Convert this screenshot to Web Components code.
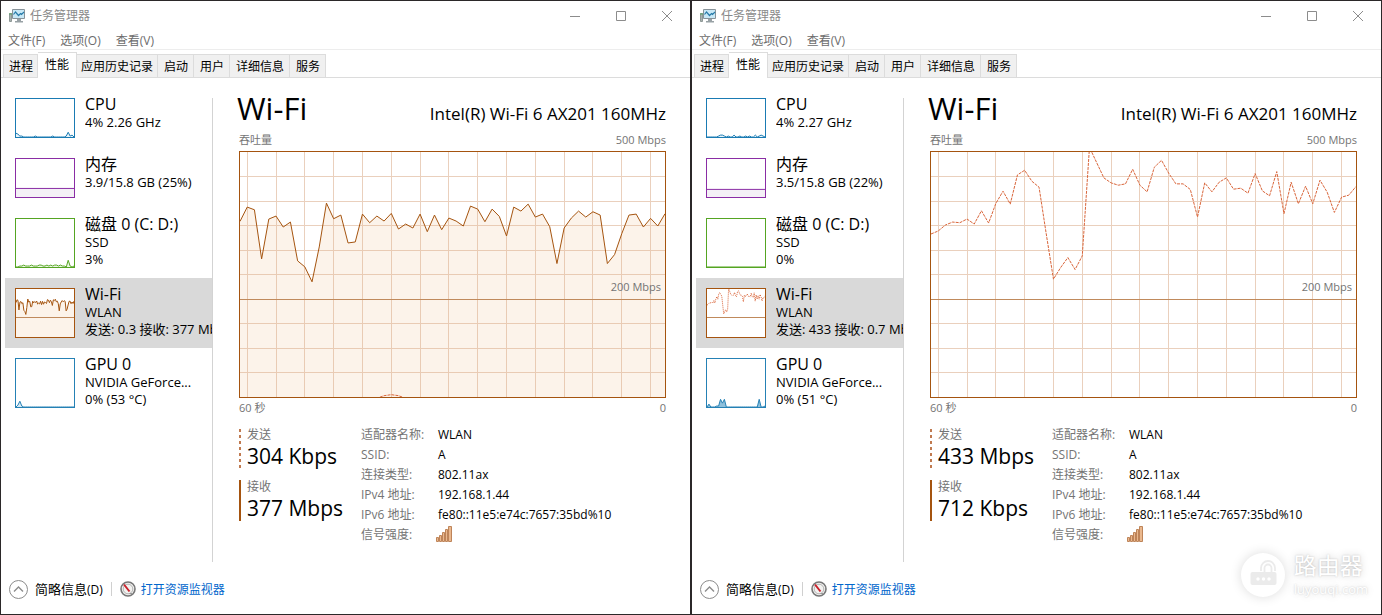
<!DOCTYPE html>
<html lang="zh-CN">
<head>
<meta charset="utf-8">
<title>任务管理器</title>
<style>
  html { height: 100%; }
  body {
    margin: 0;
    min-height: 100%;
    display: grid;
    grid-template-columns: 1fr 1fr;
    background: #fff;
    color: #000;
    font: 12px/17px "Open Sans", "Noto Sans CJK SC", sans-serif;
    position: relative;
  }
  site-mark { position: absolute; right: 16px; bottom: 17px; }
</style>
</head>
<body>

<task-window>
  <perf-item slot="item" name="CPU" short>
    <trace-chart slot="thumb" color="#1a7bb3" fill="#e8f3f9" max="40" receive="4,3,1,1,0,0,0,0,0,0,1,0,0,0,0,0,0,0,0,1,0,0,0,0,0,0,1,5,1,2,0"></trace-chart>
    <span>4% 2.26 GHz</span>
  </perf-item>
  <perf-item slot="item" name="内存" short>
    <trace-chart slot="thumb" color="#8a2da5" fill="#f4f0f6" max="40" receive="9,9"></trace-chart>
    <span>3.9/15.8 GB (25%)</span>
  </perf-item>
  <perf-item slot="item" name="磁盘 0 (C: D:)">
    <trace-chart slot="thumb" color="#55a522" fill="#edf7e6" max="50" receive="0,0,1,1,2,1,1,1,2,1,1,1,2,2,1,1,2,1,2,1,2,2,1,2,1,1,0,7,1,0,1"></trace-chart>
    <span>SSD</span><span>3%</span>
  </perf-item>
  <perf-item slot="item" name="Wi-Fi" selected>
    <trace-chart slot="thumb" series="download" color="#a5540f" fill="#fcf3ea" max="738" mark></trace-chart>
    <span>WLAN</span><span>发送: 0.3 接收: 377 Mbps</span>
  </perf-item>
  <perf-item slot="item" name="GPU 0">
    <trace-chart slot="thumb" color="#2581b5" fill="#d6e9f4" max="50" receive="0,2,6,1,0,0,0,0,0,0,0,0,0,0,0,0,0,0,0,0,0,0,0,0,0,0,0,0,0,0,0"></trace-chart>
    <span>NVIDIA GeForce...</span><span>0% (53 °C)</span>
  </perf-item>

  <trace-chart slot="chart" series="download" color="#a5540f" fill="#fcf3ea" max="738" mark grid send="0,0,0,0,0,0,0,0,0,0,0,0,0,0,0,0,0,0,0,0,4,7,4,0,0,0,0,0,0,0,0,0,0,0,0,0,0,0,0,0,0,0,0,0,0,0,0,0,0,0,0,0,0,0,0,0,0,0,0,0">200 Mbps</trace-chart>
  <rate-value slot="rate" label="发送" dashed>304 Kbps</rate-value>
  <rate-value slot="rate" label="接收">377 Mbps</rate-value>
</task-window>

<task-window>
  <perf-item slot="item" name="CPU" short>
    <trace-chart slot="thumb" color="#1a7bb3" fill="#e8f3f9" max="40" receive="0,0,0,0,0,0,1,2,2,1,0,1,0,0,2,0,0,1,0,0,1,0,1,0,0,2,0,1,2,1,0"></trace-chart>
    <span>4% 2.27 GHz</span>
  </perf-item>
  <perf-item slot="item" name="内存" short>
    <trace-chart slot="thumb" color="#8a2da5" fill="#f4f0f6" max="40" receive="8,8"></trace-chart>
    <span>3.5/15.8 GB (22%)</span>
  </perf-item>
  <perf-item slot="item" name="磁盘 0 (C: D:)">
    <trace-chart slot="thumb" color="#55a522" fill="#edf7e6" max="50" receive="0,0"></trace-chart>
    <span>SSD</span><span>0%</span>
  </perf-item>
  <perf-item slot="item" name="Wi-Fi" selected>
    <trace-chart slot="thumb" series="upload" color="#a5540f" fill="none" max="738" mark></trace-chart>
    <span>WLAN</span><span>发送: 433 接收: 0.7 Mbps</span>
  </perf-item>
  <perf-item slot="item" name="GPU 0">
    <trace-chart slot="thumb" color="#2581b5" fill="#8fc0dc" max="50" receive="0,3,0,0,0,1,1,8,4,8,0,0,0,0,0,0,0,0,0,0,0,0,0,0,0,0,0,8,0,0,1"></trace-chart>
    <span>NVIDIA GeForce...</span><span>0% (51 °C)</span>
  </perf-item>

  <trace-chart slot="chart" series="upload" color="#a5540f" fill="none" max="738" mark grid>200 Mbps</trace-chart>
  <rate-value slot="rate" label="发送" dashed>433 Mbps</rate-value>
  <rate-value slot="rate" label="接收">712 Kbps</rate-value>
</task-window>

<site-mark></site-mark>

<template id="window-template">
  <style>
    :host { display: flex; flex-direction: column; min-width: 0; border: 1px solid #2b2829; box-sizing: border-box; background: #fff; }
    * { box-sizing: border-box; }
    button { font: inherit; color: inherit; background: none; border: 0; margin: 0; padding: 0; white-space: nowrap; }
    header { display: flex; align-items: center; height: 29px; padding-left: 7px; color: #8a8a8a; }
    header h1 { font: inherit; margin: 0; padding-left: 4px; flex: 1; }
    .caption { width: 46px; height: 28px; display: grid; place-items: center; }
    .caption svg { fill: none; stroke: #8c8c8c; }
    svg { display: block; }
    .menu { display: flex; gap: 15px; height: 20px; padding: 2px 0 0 7px; color: #6c6c6c; border-bottom: 1px solid #ededed; }
    .tabs { display: flex; align-items: flex-end; height: 28px; padding-left: 2px; border-bottom: 1px solid #dcdcdc; }
    .tabs button { height: 23px; padding: 0 4px; background: #f0f0f0; border: 1px solid #dcdcdc; border-width: 1px 1px 0 0; }
    .tabs button:first-child { border-left-width: 1px; padding: 0 4px 0 5px; }
    .tabs button:nth-child(n+4) { padding: 0 5px 0 6px; }
    .tabs button[aria-selected=true] { height: 26px; padding: 0 7px 2px; background: #fff; margin-bottom: -1px; }
    main { flex: 1; display: flex; }
    nav { flex: 0 0 212px; padding: 10px 0 0 4px; display: flex; flex-direction: column; min-width: 0; }
    .rule { flex: 0 0 1px; background: #d3d3d3; margin: 20px 0 2px -1px; }
    section { flex: 1; min-width: 0; padding: 10px 24px 0 26px; }
    .head { display: flex; justify-content: space-between; align-items: baseline; height: 43px; }
    h2 { margin: 0 0 0 -2px; font-weight: 400; font-size: 31px; line-height: 40px; }
    .head p { margin: 0; font-size: 17px; line-height: 24px; white-space: nowrap; }
    .scale { display: flex; justify-content: space-between; color: #747474; font-size: 11px; line-height: 18px; padding-bottom: 2px; }
    .scale.below { padding: 1px 0; }
    .info { display: flex; padding-top: 7px; }
    .rates { flex: 0 0 122px; display: flex; flex-direction: column; gap: 12px; padding-top: 3px; }
    dl { margin: 0; display: grid; grid-template-columns: 77px auto; grid-auto-rows: 20px; line-height: 20px; }
    dt { color: #747474; } dd { margin: 0; white-space: nowrap; }
    footer { height: 50px; display: flex; align-items: center; padding-left: 8px; }
    .fewer { display: flex; align-items: center; gap: 7px; }
    .fewer span { font-size: 13px; } .fewer small { font-size: 12px; }
    footer i { width: 1px; height: 14px; background: #d0d0d0; margin: 0 8px; }
    footer a { display: flex; align-items: center; gap: 5px; color: #0066cc; text-decoration: none; }
  </style>
  <header>
    <svg width="18" height="16" viewBox="0 0 18 16">
      <path d="M1.500 5.500h2v8h-2z" fill="#a9b2b0" stroke="#8e9896"/><path d="M1 6h3" stroke="#58a868"/>
      <path d="M4.500 1.500h12v9h-12z" fill="#c8e8f6" stroke="#879299"/>
      <path d="M5.500 6.500l2-2.500 3 3.500 2-2 1 1 2.500-2.500" fill="none" stroke="#277ba9" stroke-width="1.200"/>
      <path d="M9 11h4v2h2v1.500H7V13h2z" fill="#98a1a5"/>
    </svg>
    <h1>任务管理器</h1>
    <button class="caption" aria-label="最小化"><svg width="12" height="12"><path d="M1 6.500h10"/></svg></button>
    <button class="caption" aria-label="最大化"><svg width="12" height="12"><path d="M1.500 1.500h9v9h-9z"/></svg></button>
    <button class="caption" aria-label="关闭"><svg width="12" height="12"><path d="M1 1l10 10M11 1L1 11"/></svg></button>
  </header>
  <div class="menu"><button>文件(F)</button><button>选项(O)</button><button>查看(V)</button></div>
  <div class="tabs" role="tablist">
    <button role="tab">进程</button><button role="tab" aria-selected="true">性能</button><button role="tab">应用历史记录</button><button role="tab">启动</button><button role="tab">用户</button><button role="tab">详细信息</button><button role="tab">服务</button>
  </div>
  <main>
    <nav><slot name="item"></slot></nav>
    <div class="rule"></div>
    <section>
      <div class="head"><h2>Wi-Fi</h2><p>Intel(R) Wi-Fi 6 AX201 160MHz</p></div>
      <div class="scale"><span>吞吐量</span><span>500 Mbps</span></div>
      <slot name="chart"></slot>
      <div class="scale below"><span>60 秒</span><span>0</span></div>
      <div class="info">
        <div class="rates"><slot name="rate"></slot></div>
        <dl>
          <dt>适配器名称:</dt><dd>WLAN</dd>
          <dt>SSID:</dt><dd>A</dd>
          <dt>连接类型:</dt><dd>802.11ax</dd>
          <dt>IPv4 地址:</dt><dd>192.168.1.44</dd>
          <dt>IPv6 地址:</dt><dd>fe80::11e5:e74c:7657:35bd%10</dd>
          <dt>信号强度:</dt><dd><signal-bars></signal-bars></dd>
        </dl>
      </div>
    </section>
  </main>
  <footer>
    <button class="fewer">
      <svg width="19" height="19" fill="none" stroke="#8c8c8c"><circle cx="9.500" cy="9.500" r="9"/><path d="M5 11.500l4.500-4.500 4.500 4.500" stroke-width="1.400"/></svg>
      <span>简略信息<small>(D)</small></span>
    </button>
    <i></i>
    <a href="#">
      <svg width="16" height="16"><circle cx="8" cy="8" r="7" fill="#f2f2f0" stroke="#777" stroke-width="1.600"/><circle cx="8" cy="8" r="4.800" fill="none" stroke="#b4b4b4"/><path d="M4 3.500l5.500 7" stroke="#c9222c" stroke-width="2"/><path d="M9.500 12.500h3" stroke="#999"/></svg>
      打开资源监视器
    </a>
  </footer>
</template>

<template id="item-template">
  <style>
    :host { display: block; }
    button { display: flex; gap: 10px; width: 100%; height: 70px; padding: 6px 0 0 10px; margin: 0; border: 0; background: none; color: inherit; font: inherit; font-size: 13px; text-align: left; overflow: hidden; box-sizing: border-box; }
    :host([short]) button { height: 60px; }
    :host([selected]) button { background: #d9d9d9; }
    .thumb { flex: 0 0 60px; height: 50px; margin-top: 4px; }
    :host([short]) .thumb { height: 40px; }
    .text { flex: 1; min-width: 0; overflow: hidden; white-space: nowrap; }
    strong { display: block; font-weight: 400; font-size: 16px; line-height: 20px; }
    ::slotted(span) { display: block; }
  </style>
  <button><div class="thumb"><slot name="thumb"></slot></div><div class="text"><strong></strong><slot></slot></div></button>
</template>

<template id="chart-template">
  <style>
    :host { display: block; position: relative; box-sizing: border-box; height: 100%; border: 1px solid var(--ink); background: #fff; }
    :host([grid]) { height: 247px; }
    svg { display: block; width: 100%; height: 100%; }
    svg * { vector-effect: non-scaling-stroke; }
    .grid { stroke: #d9a987; stroke-opacity: .55; shape-rendering: crispEdges; }
    .mark { stroke: #c08a5c; shape-rendering: crispEdges; }
    .send { fill: none; stroke: #d9653a; stroke-dasharray: 3 1; }
    :host(:not([grid])) .send { stroke-dasharray: 1 1; }
    span { position: absolute; right: 4px; bottom: 40%; font-size: 11px; line-height: 24px; color: #747474; }
    :host(:not([grid])) span { display: none; }
  </style>
  <svg preserveAspectRatio="none" viewBox="0 0 100 100"></svg><span><slot></slot></span>
</template>

<template id="rate-template">
  <style>
    :host { display: block; border-left: 2px solid #a5540f; padding-left: 6px; height: 41px; box-sizing: border-box; }
    :host([dashed]) { border-left: 0; padding-left: 8px; background: repeating-linear-gradient(#c07a50 0 3px, transparent 3px 6px) left / 2px 39px no-repeat; height: 40px; }
    small { display: block; font-size: 12px; line-height: 14px; color: #747474; }
    b { display: block; font-weight: 400; font-size: 21px; line-height: 28px; white-space: nowrap; }
  </style>
  <small></small><b><slot></slot></b>
</template>

<template id="signal-template">
  <style>:host { display: block; margin-left: -3px; } svg { display: block; }</style>
  <svg width="17" height="17" fill="#eab88e" stroke="#be8459"><path d="M1.500 12.500h2v4h-2zM4.500 10.500h2v6h-2zM7.500 7.500h2v9h-2zM10.500 4.500h2v12h-2zM13.500 1.500h3v15h-3z"/></svg>
</template>

<template id="mark-template">
  <style>
    :host { display: flex; align-items: center; gap: 9px; color: #fff; }
    .disc { width: 44px; height: 44px; border-radius: 50%; background: #fff; box-shadow: 0 0 12px #00000024; }
    p { margin: 0 -2px 0 0; text-shadow: 0 0 2px #0003, 0 0 8px #0003; font-size: 13px; line-height: 18px; }
    b { display: block; font: 400 23px/28px "Liberation Sans", "Noto Sans CJK SC", sans-serif; }
  </style>
  <svg class="disc" viewBox="0 0 44 44">
    <rect x="9.500" y="19" width="26" height="13" rx="2" fill="#ebebeb"/>
    <g fill="none" stroke="#ebebeb" stroke-width="1.800"><path d="M20 18v-3a7 7 0 0 1 14 0v3"/><path d="M23.500 19v-4a3.500 3.500 0 0 1 7 0v4"/></g>
    <g fill="#fff"><circle cx="17" cy="26" r="1.700"/><circle cx="22.500" cy="26" r="1.700"/><circle cx="28" cy="26" r="1.700"/></g>
  </svg>
  <p><b>路由器</b>luyouqi.com</p>
</template>

<script>
  const SERIES = {
    download: [529,572,564,416,536,545,512,527,410,392,347,452,584,537,548,464,467,551,525,545,530,553,506,521,509,551,498,548,504,539,530,515,575,566,528,566,544,485,572,560,581,542,551,513,402,509,539,560,542,558,548,402,429,492,548,551,512,538,515,552],
    upload: [491,500,518,527,525,536,521,561,524,583,620,581,669,683,650,632,491,355,390,420,384,425,752,706,660,645,638,642,686,638,618,692,713,674,642,642,625,542,645,618,647,660,626,629,614,673,621,606,679,552,647,582,635,582,653,617,556,602,608,634]
  };

  class TemplateElement extends HTMLElement {
    constructor() {
      super();
      this.attachShadow({ mode: 'open' })
        .append(document.getElementById(this.constructor.template).content.cloneNode(true));
    }
  }

  class TaskWindow extends TemplateElement { static template = 'window-template'; }
  class SignalBars extends TemplateElement { static template = 'signal-template'; }
  class SiteMark extends TemplateElement { static template = 'mark-template'; }

  class PerfItem extends TemplateElement {
    static template = 'item-template';
    connectedCallback() { this.shadowRoot.querySelector('strong').textContent = this.getAttribute('name'); }
  }

  class RateValue extends TemplateElement {
    static template = 'rate-template';
    connectedCallback() { this.shadowRoot.querySelector('small').textContent = this.getAttribute('label'); }
  }

  class TraceChart extends TemplateElement {
    static template = 'chart-template';
    points(values) {
      const max = Number(this.getAttribute('max'));
      return values.map((v, i) => `${i * 100 / (values.length - 1)},${100 - v * 100 / max}`).join(' ');
    }
    list(name) {
      return this.hasAttribute(name) ? this.getAttribute(name).split(',').map(Number) : null;
    }
    connectedCallback() {
      const series = this.getAttribute('series');
      const color = this.getAttribute('color');
      const receive = series === 'download' ? SERIES.download : this.list('receive');
      const send = series === 'upload' ? SERIES.upload : this.list('send');
      this.style.setProperty('--ink', color);
      let out = '';
      if (receive) out += `<polygon points="0,100 ${this.points(receive)} 100,100" fill="${this.getAttribute('fill')}"/>`;
      if (this.hasAttribute('grid')) {
        let d = '';
        for (let i = 1; i < 59; i += 4) d += `M${i * 100 / 59} 0V100`;
        for (let y = 10; y < 100; y += 10) d += `M0 ${y}H100`;
        out += `<path class="grid" d="${d}"/>`;
      }
      if (this.hasAttribute('mark')) out += '<path class="mark" d="M0 60H100"/>';
      if (receive) out += `<polyline points="${this.points(receive)}" fill="none" stroke="${color}"/>`;
      // Idle samples of the send line run below the frame, so only bursts show.
      if (send) out += `<polyline class="send" points="${this.points(send.map(v => v || -4))}"/>`;
      this.shadowRoot.querySelector('svg').innerHTML = out;
    }
  }

  customElements.define('signal-bars', SignalBars);
  customElements.define('trace-chart', TraceChart);
  customElements.define('perf-item', PerfItem);
  customElements.define('rate-value', RateValue);
  customElements.define('task-window', TaskWindow);
  customElements.define('site-mark', SiteMark);
</script>
</body>
</html>
